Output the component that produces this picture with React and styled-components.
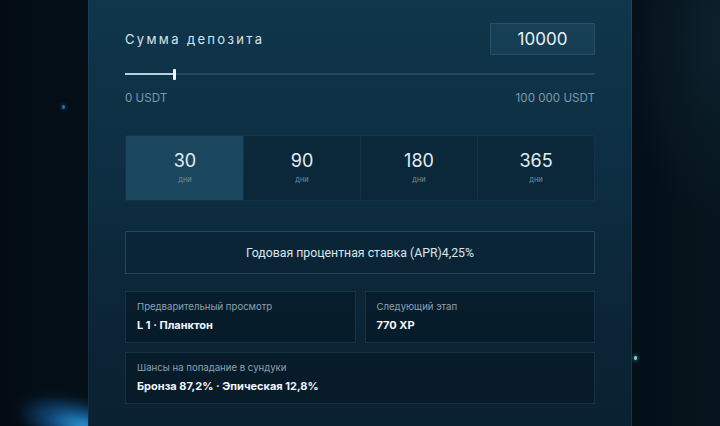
import React, { useState } from "react";
import styled, { createGlobalStyle } from "styled-components";

const Global = createGlobalStyle`
  html, body {
    margin: 0;
    padding: 0;
    height: 426px;
    overflow: hidden;
    background: #030d15;
  }
  * { box-sizing: border-box; }
  body {
    font-family: Inter, Roboto, "Noto Sans", sans-serif;
    -webkit-font-smoothing: antialiased;
  }
`;

const Page = styled.div`
  position: relative;
  height: 426px;
  display: flex;
  justify-content: center;
  overflow: hidden;
  background:
    radial-gradient(ellipse 140px 260px at 720px 40px, rgba(16, 40, 54, 0.6), transparent 70%),
    linear-gradient(90deg, #030c14 0%, #040f18 12%, #040f18 88%, #06151d 100%);
`;

const Glow = styled.div`
  position: absolute;
  left: 14px;
  top: 398px;
  width: 130px;
  height: 50px;
  border-radius: 50%;
  background: radial-gradient(ellipse at 55% 55%, rgba(50, 170, 240, 0.95) 0%, rgba(25, 120, 200, 0.55) 35%, transparent 70%);
  transform: rotate(16deg);
  filter: blur(4px);
`;

const Spark = styled.div`
  position: absolute;
  left: ${(p) => p.$x}px;
  top: ${(p) => p.$y}px;
  width: 3px;
  height: 4px;
  border-radius: 50%;
  background: ${(p) => p.$c};
  box-shadow: 0 0 4px ${(p) => p.$c};
`;

const Panel = styled.section`
  position: relative;
  z-index: 1;
  width: 544px;
  height: 426px;
  padding: 23px 36px 0;
  background: linear-gradient(180deg, #0f364b 0%, #0d2e42 40%, #0b2536 75%, #0a2131 100%);
  border-left: 1px solid rgba(110, 160, 190, 0.1);
  border-right: 1px solid rgba(110, 160, 190, 0.14);
`;

const Header = styled.div`
  display: flex;
  justify-content: space-between;
  align-items: center;
  height: 32px;
`;

const Title = styled.h2`
  margin: 0;
  font-size: 13px;
  font-weight: 400;
  letter-spacing: 2.35px;
  color: #d5e2ea;
`;

const AmountInput = styled.input`
  width: 105px;
  height: 32px;
  border: 1px solid rgba(140, 190, 220, 0.14);
  background: rgba(60, 110, 140, 0.18);
  color: #e9f1f5;
  font-family: inherit;
  font-size: 17px;
  text-align: center;
  outline: none;
  padding: 0;
`;

const Slider = styled.div`
  position: relative;
  margin-top: 14px;
  height: 10px;
  display: flex;
  align-items: center;
`;

const Track = styled.div`
  width: 100%;
  height: 2px;
  background: rgba(110, 160, 190, 0.22);
`;

const Fill = styled.div`
  position: absolute;
  left: 0;
  top: 4px;
  height: 2px;
  background: #b9d0dc;
`;

const Thumb = styled.div`
  position: absolute;
  top: 0;
  width: 3px;
  height: 11px;
  border-radius: 1px;
  background: #f2f7fa;
  transform: translateX(-1px);
`;

const Range = styled.div`
  display: flex;
  justify-content: space-between;
  margin-top: 13px;
  font-size: 11.6px;
  line-height: 13px;
  color: #7e98a9;
`;

const Periods = styled.div`
  margin-top: 30px;
  display: grid;
  grid-template-columns: repeat(4, 1fr);
  height: 66px;
  border: 1px solid rgba(110, 160, 190, 0.1);
  background: rgba(8, 30, 45, 0.35);
`;

const Period = styled.button`
  display: flex;
  flex-direction: column;
  align-items: center;
  justify-content: center;
  border: 0;
  border-left: 1px solid ${(p) => (p.$first ? "transparent" : "rgba(110, 160, 190, 0.09)")};
  background: ${(p) => (p.$active ? "#1a475d" : "transparent")};
  cursor: pointer;
  font-family: inherit;
  padding: 0 0 2px;
`;

const Days = styled.span`
  font-size: 18px;
  line-height: 22px;
  color: #e4edf2;
`;

const DaysUnit = styled.span`
  margin-top: 3px;
  font-size: 7.5px;
  line-height: 9px;
  color: #6d8b9d;
`;

const AprBox = styled.div`
  margin-top: 30px;
  height: 43px;
  display: flex;
  align-items: center;
  justify-content: center;
  border: 1px solid rgba(130, 180, 210, 0.24);
  background: rgba(6, 24, 38, 0.22);
  font-family: Roboto, Inter, sans-serif;
  font-size: 12.3px;
  color: #dbe6ec;
`;

const InfoGrid = styled.div`
  margin-top: 17px;
  display: grid;
  grid-template-columns: 1fr 1fr;
  grid-auto-rows: 52px;
  gap: 9px;
`;

const InfoCard = styled.div`
  grid-column: ${(p) => (p.$wide ? "1 / -1" : "auto")};
  display: flex;
  flex-direction: column;
  justify-content: center;
  padding: 0 11px 1px;
  border: 1px solid rgba(120, 170, 200, 0.16);
  background: rgba(3, 16, 27, 0.38);
`;

const InfoLabel = styled.span`
  font-size: 9.6px;
  line-height: 12px;
  color: #8ca3b2;
`;

const InfoValue = styled.span`
  margin-top: 6px;
  font-size: 11px;
  line-height: 13px;
  font-weight: 700;
  color: #f1f6f9;
`;

const periods = [30, 90, 180, 365];

export default function App() {
  const [amount, setAmount] = useState("10000");
  const [period, setPeriod] = useState(30);
  const pct = Math.min(100, Math.max(0, (Number(amount) || 0) / 1000)) * 1.04;

  return (
    <>
      <Global />
      <Page>
        <Glow />
        <Spark $x={62} $y={105} $c="#2b6fae" />
        <Spark $x={634} $y={356} $c="#7fd8f0" />
        <Panel>
          <Header>
            <Title>Сумма депозита</Title>
            <AmountInput value={amount} onChange={(e) => setAmount(e.target.value)} />
          </Header>
          <Slider>
            <Track />
            <Fill style={{ width: `${pct}%` }} />
            <Thumb style={{ left: `${pct}%` }} />
          </Slider>
          <Range>
            <span>0 USDT</span>
            <span>100 000 USDT</span>
          </Range>
          <Periods>
            {periods.map((d, i) => (
              <Period key={d} $first={i === 0} $active={period === d} onClick={() => setPeriod(d)}>
                <Days>{d}</Days>
                <DaysUnit>дни</DaysUnit>
              </Period>
            ))}
          </Periods>
          <AprBox>Годовая процентная ставка (APR)4,25%</AprBox>
          <InfoGrid>
            <InfoCard>
              <InfoLabel>Предварительный просмотр</InfoLabel>
              <InfoValue>L 1 · Планктон</InfoValue>
            </InfoCard>
            <InfoCard>
              <InfoLabel>Следующий этап</InfoLabel>
              <InfoValue>770 XP</InfoValue>
            </InfoCard>
            <InfoCard $wide>
              <InfoLabel>Шансы на попадание в сундуки</InfoLabel>
              <InfoValue>Бронза 87,2% · Эпическая 12,8%</InfoValue>
            </InfoCard>
          </InfoGrid>
        </Panel>
      </Page>
    </>
  );
}
